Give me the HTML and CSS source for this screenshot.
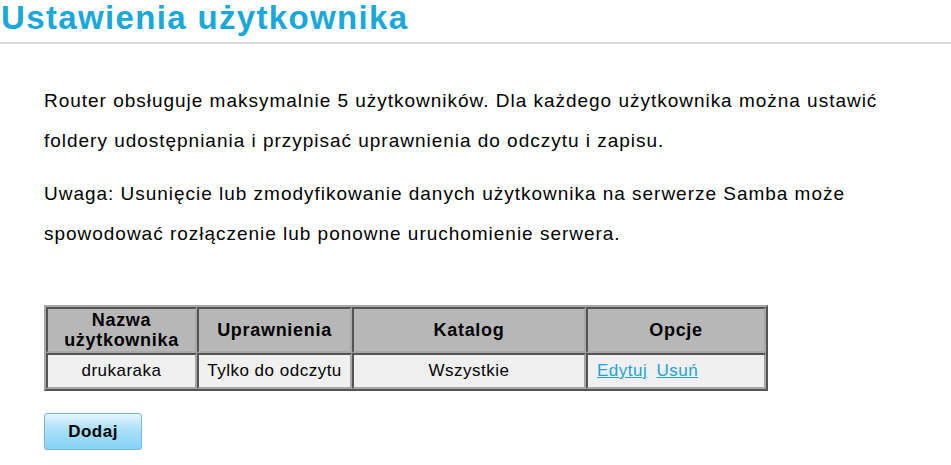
FILE: index.html
```html
<!DOCTYPE html>
<html lang="pl">
<head>
<meta charset="utf-8">
<title>Ustawienia użytkownika</title>
<link rel="stylesheet" href="styles.css">
</head>
<body>
<h1 class="title">Ustawienia użytkownika</h1>
<div class="content">
  <p class="info">Router obsługuje maksymalnie 5 użytkowników. Dla każdego użytkownika można ustawić foldery udostępniania i przypisać uprawnienia do odczytu i zapisu.</p>
  <p class="info">Uwaga: Usunięcie lub zmodyfikowanie danych użytkownika na serwerze Samba może spowodować rozłączenie lub ponowne uruchomienie serwera.</p>
  <table class="users">
    <thead>
      <tr>
        <th class="c1">Nazwa<br>użytkownika</th>
        <th class="c2">Uprawnienia</th>
        <th class="c3">Katalog</th>
        <th class="c4">Opcje</th>
      </tr>
    </thead>
    <tbody>
      <tr>
        <td>drukaraka</td>
        <td>Tylko do odczytu</td>
        <td>Wszystkie</td>
        <td class="opts"><a href="#">Edytuj</a> <a href="#">Usuń</a></td>
      </tr>
    </tbody>
  </table>
  <button class="add">Dodaj</button>
</div>
</body>
</html>
```
FILE: styles.css
```css
html, body {
  margin: 0;
  padding: 0;
  background: #fff;
  font-family: "Liberation Sans", Arial, sans-serif;
  color: #000;
}
.title {
  margin: 0;
  padding: 0 0 0 1px;
  height: 42px;
  line-height: 36px;
  font-size: 33px;
  letter-spacing: 1.35px;
  font-weight: bold;
  color: #1aa7d9;
  border-bottom: 2px solid #dcdcdc;
}
.content {
  padding: 37px 20px 0 44px;
}
.info {
  margin: 0 0 13px 0;
  font-size: 19px;
  letter-spacing: 0.98px;
  line-height: 40px;
}
.users {
  margin-top: 51px;
  border-collapse: separate;
  border-spacing: 0;
  border: 2px outset #a8a8a8;
  font-size: 17px;
  table-layout: fixed;
  width: 724px;
}
.users th, .users td {
  box-sizing: border-box;
  border: 2px inset #a8a8a8;
  text-align: center;
  padding: 0 2px;
}
.users th {
  background: #b7b7b7;
  font-size: 18px;
  letter-spacing: 0.7px;
  font-weight: bold;
  height: 46px;
  line-height: 20px;
}
.users td {
  background: #f0f0f0;
  height: 36px;
  letter-spacing: 0.5px;
}
.c1 { width: 151px; }
.c2 { width: 155px; }
.c3 { width: 234px; }
.c4 { width: 180px; }
.users td.opts {
  text-align: left;
  padding-left: 9px;
}
.opts a {
  color: #1fa3da;
  text-decoration: underline;
  margin-right: 4px;
}
.add {
  display: block;
  margin-top: 22px;
  width: 98px;
  height: 37px;
  font-family: "Liberation Sans", Arial, sans-serif;
  font-size: 17px;
  letter-spacing: 0.5px;
  font-weight: bold;
  color: #000;
  border: 1px solid #7db6dc;
  border-radius: 3px;
  background: linear-gradient(to bottom, #e6f6fd 0%, #a9e0fa 45%, #86d3f7 100%);
  box-shadow: 0 1px 1px rgba(0,0,0,0.15);
}
```
